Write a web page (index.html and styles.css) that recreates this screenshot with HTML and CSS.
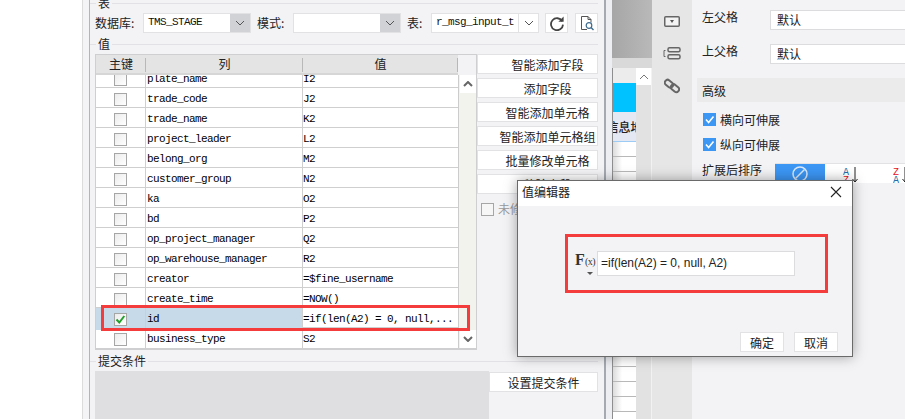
FILE: index.html
```html
<!DOCTYPE html>
<html lang="zh">
<head>
<meta charset="utf-8">
<title>值编辑器</title>
<link rel="stylesheet" href="styles.css">
</head>
<body>
<div class="page">
  <div class="blank"></div>
  <div class="pad"></div>
  <main class="panel">
    <div class="legend legend-first"><span>表</span></div>
    <div class="db-row">
      <label class="lbl lbl-db">数据库:</label>
      <div class="select select-db"><span class="sel-text mono">TMS_STAGE</span><span class="sel-arrow"><svg width="10" height="6" viewBox="0 0 10 6"><path d="M1 1l4 4 4-4" fill="none" stroke="#555" stroke-width="1"/></svg></span></div>
      <label class="lbl lbl-mode">模式:</label>
      <div class="select select-db"><span class="sel-text mono"></span><span class="sel-arrow"><svg width="10" height="6" viewBox="0 0 10 6"><path d="M1 1l4 4 4-4" fill="none" stroke="#555" stroke-width="1"/></svg></span></div>
      <label class="lbl lbl-table">表:</label>
      <div class="select select-db"><span class="sel-text mono">r_msg_input_t</span><span class="sel-arrow plain"><svg width="10" height="6" viewBox="0 0 10 6"><path d="M1 1l4 4 4-4" fill="none" stroke="#555" stroke-width="1"/></svg></span></div>
      <button class="icon-btn icon-refresh"><svg width="16" height="16" viewBox="0 0 16 16"><path d="M13.2 6.2A6 6 0 1 0 14 9.6" fill="none" stroke="#444" stroke-width="1.8"/><path d="M14.6 1.4v5.4H9.4z" fill="#444"/></svg></button>
      <button class="icon-btn"><svg width="16" height="16" viewBox="0 0 16 16"><path d="M8 14.5H2.5v-13H9l3 3v3" fill="none" stroke="#555" stroke-width="1"/><path d="M9 1.5v3h3" fill="none" stroke="#555" stroke-width="1"/><circle cx="10" cy="10.5" r="2.8" fill="none" stroke="#3d6b8f" stroke-width="1.2"/><path d="M12 12.5l2.5 2.5" stroke="#3d6b8f" stroke-width="1.4"/></svg></button>
    </div>
    <div class="legend legend-mid"><span>值</span></div>
    <div class="value-row">
      <div class="table">
        <div class="thead">
          <div class="th">主键</div>
          <div class="th">列</div>
          <div class="th">值</div>
          <div class="th-fill"></div>
        </div>
        <div class="thead-gap"></div>
        <div class="tbody-wrap">
          <div class="rows">
            <div class="row"><div class="c-key"><i class="cb"></i></div><div class="c-col">plate_name</div><div class="c-val">I2</div></div>
            <div class="row"><div class="c-key"><i class="cb"></i></div><div class="c-col">trade_code</div><div class="c-val">J2</div></div>
            <div class="row"><div class="c-key"><i class="cb"></i></div><div class="c-col">trade_name</div><div class="c-val">K2</div></div>
            <div class="row"><div class="c-key"><i class="cb"></i></div><div class="c-col">project_leader</div><div class="c-val">L2</div></div>
            <div class="row"><div class="c-key"><i class="cb"></i></div><div class="c-col">belong_org</div><div class="c-val">M2</div></div>
            <div class="row"><div class="c-key"><i class="cb"></i></div><div class="c-col">customer_group</div><div class="c-val">N2</div></div>
            <div class="row"><div class="c-key"><i class="cb"></i></div><div class="c-col">ka</div><div class="c-val">O2</div></div>
            <div class="row"><div class="c-key"><i class="cb"></i></div><div class="c-col">bd</div><div class="c-val">P2</div></div>
            <div class="row"><div class="c-key"><i class="cb"></i></div><div class="c-col">op_project_manager</div><div class="c-val">Q2</div></div>
            <div class="row"><div class="c-key"><i class="cb"></i></div><div class="c-col">op_warehouse_manager</div><div class="c-val">R2</div></div>
            <div class="row"><div class="c-key"><i class="cb"></i></div><div class="c-col">creator</div><div class="c-val">=$fine_username</div></div>
            <div class="row"><div class="c-key"><i class="cb"></i></div><div class="c-col">create_time</div><div class="c-val">=NOW()</div></div>
            <div class="row row-sel"><div class="c-key"><i class="cb"><svg width="11" height="11" viewBox="0 0 11 11"><path d="M1.5 5.5l2.8 3 5-6.5" fill="none" stroke="#22a02c" stroke-width="2"/></svg></i></div><div class="c-col">id</div><div class="c-val">=if(len(A2) = 0, null,...</div></div>
            <div class="row"><div class="c-key"><i class="cb"></i></div><div class="c-col">business_type</div><div class="c-val">S2</div></div>
          </div>
          <div class="vscroll">
            <span class="vs-btn"><svg width="10" height="6" viewBox="0 0 10 6"><path d="M1 5l4-4 4 4" fill="none" stroke="#666" stroke-width="2"/></svg></span>
            <span class="vs-btn"><svg width="10" height="6" viewBox="0 0 10 6"><path d="M1 1l4 4 4-4" fill="none" stroke="#666" stroke-width="2"/></svg></span>
          </div>
          <div class="mark-row"></div>
        </div>
      </div>
      <div class="side">
        <button class="btn">智能添加字段</button>
        <button class="btn">添加字段</button>
        <button class="btn">智能添加单元格</button>
        <button class="btn">智能添加单元格组</button>
        <button class="btn">批量修改单元格</button>
        <button class="btn">移除字段</button>
        <div class="unmod"><i class="cb-plain"></i><span>未修改不更新</span></div>
      </div>
    </div>
    <div class="legend legend-mid"><span>提交条件</span></div>
    <div class="submit-row">
      <div class="submit-box"></div>
      <button class="btn btn-submit">设置提交条件</button>
    </div>
  </main>
  <div class="gutter"></div>
  <section class="sheet">
    <div class="sheet-top"></div>
    <div class="sheet-top2"></div>
    <div class="sheet-main">
      <div class="grid">
        <div class="g-head"></div>
        <div class="g-blue"></div>
        <div class="g-title"><span>信息地</span></div>
        <div class="g-rows">
          <div class="g-row first"></div><div class="g-row"></div><div class="g-row"></div><div class="g-row"></div><div class="g-row"></div>
          <div class="g-row"></div><div class="g-row"></div><div class="g-row"></div><div class="g-row"></div><div class="g-row"></div>
          <div class="g-row"></div><div class="g-row"></div><div class="g-row"></div><div class="g-row"></div><div class="g-row"></div>
          <div class="g-row"></div><div class="g-row"></div><div class="g-row"></div>
        </div>
      </div>
      <div class="g-scroll"><span class="g-up"><svg width="10" height="6" viewBox="0 0 10 6"><path d="M1 5l4-4 4 4" fill="none" stroke="#777" stroke-width="1"/></svg></span></div>
    </div>
  </section>
  <nav class="tools">
    <svg width="16" height="11" viewBox="0 0 16 11"><rect x="0.75" y="0.75" width="14.5" height="9.5" rx="1" fill="#f3f3f3" stroke="#666" stroke-width="1.5"/><path d="M6 4h4l-2 3z" fill="#555"/></svg>
    <svg class="tool-mid" width="18" height="13" viewBox="0 0 18 13"><path d="M2.5 3.5H1v6h1.5" fill="none" stroke="#666" stroke-width="1"/><rect x="5" y="0.75" width="12" height="4" rx="1.5" fill="none" stroke="#666" stroke-width="1.5"/><rect x="5" y="7.75" width="12" height="4" rx="1.5" fill="none" stroke="#666" stroke-width="1.5"/></svg>
    <svg width="16" height="16" viewBox="0 0 16 16"><g fill="none" stroke="#666" stroke-width="2"><rect x="0.5" y="3" width="9" height="5.5" rx="2.7" transform="rotate(40 5 5.7)"/><rect x="6.5" y="7.5" width="9" height="5.5" rx="2.7" transform="rotate(40 11 10.2)"/></g></svg>
  </nav>
  <aside class="props">
    <div class="prop"><span class="prop-l">左父格</span><div class="prop-i">默认</div></div>
    <div class="prop"><span class="prop-l">上父格</span><div class="prop-i">默认</div></div>
    <div class="band">高级</div>
    <div class="check"><i class="cb-blue"><svg width="13" height="13" viewBox="0 0 13 13"><path d="M3 6.5l2.6 3L10.5 3.5" fill="none" stroke="#fff" stroke-width="1.6"/></svg></i><span>横向可伸展</span></div>
    <div class="check"><i class="cb-blue"><svg width="13" height="13" viewBox="0 0 13 13"><path d="M3 6.5l2.6 3L10.5 3.5" fill="none" stroke="#fff" stroke-width="1.6"/></svg></i><span>纵向可伸展</span></div>
    <div class="sort">
      <span class="sort-l">扩展后排序</span>
      <div class="seg">
        <span class="seg-on"><svg width="16" height="16" viewBox="0 0 16 16"><circle cx="8" cy="8" r="7" fill="none" stroke="#dce9fb" stroke-width="1.5"/><path d="M3.5 12.5l9-9" stroke="#dce9fb" stroke-width="1.5"/></svg></span>
        <span class="seg-i"><svg width="18" height="18" viewBox="0 0 18 18"><text x="0" y="9" class="az-a">A</text><text x="0" y="17" class="az-z">Z</text><path d="M12 1v15M9.5 13l2.5 3 2.5-3" fill="none" stroke="#222" stroke-width="1"/></svg></span>
        <span class="seg-i"><svg width="18" height="18" viewBox="0 0 18 18"><text x="0" y="9" class="az-z">Z</text><text x="0" y="17" class="az-a">A</text><path d="M12 1v15M9.5 13l2.5 3 2.5-3" fill="none" stroke="#222" stroke-width="1"/></svg></span>
      </div>
    </div>
  </aside>
  <div class="dialog">
    <header class="dlg-head"><span>值编辑器</span><svg width="12" height="12" viewBox="0 0 12 12"><path d="M1 1l10 10M11 1L1 11" stroke="#222" stroke-width="1.1"/></svg></header>
    <div class="dlg-body">
      <div class="formula">
        <div class="fx"><span class="fx-f">F</span><span class="fx-x">(x)</span><i class="fx-tri"></i></div>
        <div class="fx-input">=if(len(A2) = 0, null, A2)</div>
      </div>
      <div class="dlg-foot">
        <button class="btn btn-dlg">确定</button>
        <button class="btn btn-dlg">取消</button>
      </div>
    </div>
  </div>
</div>
</body>
</html>
```
FILE: styles.css
```css
* { box-sizing: border-box; }
html, body { margin: 0; padding: 0; }
body { width: 905px; height: 419px; overflow: hidden; background: #fff; font: 12px/14px "Noto Sans CJK SC", "Liberation Sans", sans-serif; color: #222; }
button { font: inherit; color: inherit; margin: 0; cursor: default; }
i { display: block; }
.page { position: relative; display: flex; width: 905px; height: 419px; overflow: hidden; }
.blank { width: 83px; flex: none; background: #fff; border-right: 1px solid #dcdcdc; }
.pad { width: 7px; flex: none; background: #f4f4f6; border-right: 1px solid #b4b4b8; }
.panel { width: 516px; flex: none; padding: 0 6px 0 5px; background: #f3f3f6; border-right: 2px solid #a5aab2; }
.legend { display: flex; align-items: center; gap: 2px; height: 14px; margin-left: -5px; }
.legend::before { content: ""; width: 6px; height: 1px; background: #e2e2e6; }
.legend::after { content: ""; flex: 1; height: 1px; background: #e2e2e6; }
.legend-first { margin-top: -4px; }
.legend-mid { margin-top: 4px; }
.db-row { display: flex; align-items: center; height: 20px; margin-top: 3px; }
.lbl { flex: none; }
.lbl-db { width: 48px; }
.lbl-mode { width: 36px; margin-left: 6px; }
.lbl-table { width: 24px; margin-left: 6px; }
.mono { font-family: "Liberation Mono", monospace; }
.select { display: flex; width: 108px; height: 20px; flex: none; background: #fff; border: 1px solid #e2e2e4; }
.sel-text { flex: 1; padding-left: 4px; font-size: 11px; letter-spacing: -0.6px; line-height: 17px; white-space: nowrap; overflow: hidden; color: #111; }
.sel-arrow { display: flex; align-items: center; justify-content: center; width: 20px; background: #d0d2d5; }
.sel-arrow.plain { background: #fff; border-left: 1px solid #e2e2e4; }
.icon-btn { display: flex; align-items: center; justify-content: center; width: 23px; height: 20px; padding: 0; background: #fff; border: 1px solid #e2e2e4; margin-left: 7px; }
.icon-refresh { margin-left: 6px; }
.value-row { display: flex; margin-top: 3px; }
.table { position: relative; width: 382px; height: 296px; flex: none; border: 1px solid #cfcfd1; border-bottom-width: 2px; background: #f3f3f6; }
.thead { display: grid; grid-template-columns: 50px 157px 155px 1fr; height: 18px; }
.th { position: relative; text-align: center; line-height: 18px; background: #e4e4e4; }
.th::after { content: ""; position: absolute; right: 0; top: 3px; bottom: 1px; width: 1px; background: #b8b8b8; }
.th-fill { background: #f3f3f6; }
.thead-gap { height: 2px; width: 362px; background: #d6d6d6; }
.tbody-wrap { position: relative; display: flex; height: 273px; overflow: hidden; }
.rows { display: flex; flex-direction: column; justify-content: flex-end; width: 363px; flex: none; background: #fff; border-right: 1px solid #ccc; }
.row { display: grid; grid-template-columns: 50px 157px 1fr; flex: none; height: 20px; border-bottom: 1px solid #cfcfcf; font: 11px/22px "Liberation Mono", monospace; letter-spacing: -0.6px; color: #000; white-space: nowrap; }
.row:last-child { border-bottom: 0; }
.c-key { display: flex; align-items: center; justify-content: center; border-right: 1px solid #cfcfcf; padding-right: 1px; }
.c-col { border-right: 1px solid #cfcfcf; padding-left: 1px; }
.c-val { overflow: hidden; }
.row-sel .c-key, .row-sel .c-col { background: #c7dae9; }
.cb { display: flex; align-items: center; justify-content: center; width: 13px; height: 13px; border: 1px solid #a6a6a6; background: linear-gradient(135deg, #ececec, #fff); }
.vscroll { display: flex; flex: 1; flex-direction: column; justify-content: space-between; margin-left: 1px; background: #f3f3ee; }
.vs-btn { display: flex; align-items: center; justify-content: center; height: 18px; background: #fff; }
.mark-row { position: absolute; left: 5px; bottom: 17px; width: 369px; height: 26px; border: 3px solid #f53c3c; }
.side { display: flex; width: 121px; flex: none; flex-direction: column; gap: 4px; }
.btn { height: 20px; padding: 0 0 0 20px; background: #fff; border: 1px solid #e2e2e4; text-align: center; line-height: 17px; white-space: nowrap; }
.unmod { display: flex; align-items: center; gap: 4px; margin: 4px 0 0 4px; color: #999; }
.cb-plain { width: 13px; height: 13px; border: 1px solid #a6a6a6; background: #f6f6f6; }
.submit-row { display: flex; margin-top: 3px; height: 48px; }
.submit-box { width: 394px; flex: none; background: #dfdfe1; }
.btn-submit { width: 109px; height: 20px; padding: 0; margin-top: 1px; }
.gutter { width: 6px; flex: none; background: #eceef2; }
.sheet { display: flex; width: 40px; flex: none; flex-direction: column; background: #e2e2e2; }
.sheet-top { height: 58px; background: linear-gradient(90deg, #a6a6a6, #b9b9b9); }
.sheet-top2 { height: 10px; background: #d9d9d9; }
.sheet-main { display: flex; flex: 1; min-height: 0; }
.grid { width: 24px; flex: none; overflow: hidden; background: #fff; border-left: 1px solid #8e8e8e; }
.g-head { height: 15px; background: #ececec; }
.g-blue { height: 29px; background: #00c2ff; }
.g-title { display: flex; justify-content: center; height: 30px; padding-top: 8px; background: #e4e8f2; border-bottom: 1px solid #9ccbf5; white-space: nowrap; font-weight: 500; }
.g-title span { flex: none; }
.g-rows { background: linear-gradient(90deg, #dcdcdc, #fff 40%); }
.g-row { height: 15px; border-bottom: 1px solid #b8b8b8; }
.g-scroll { flex: 1; border-right: 1px solid #f2f2f2; }
.g-up { display: flex; align-items: center; justify-content: center; height: 17px; background: #fff; }
.tools { display: flex; width: 40px; flex: none; flex-direction: column; align-items: center; gap: 20px; padding-top: 16px; background: #e6e6e6; }
.tool-mid { margin-bottom: -2px; }
.props { flex: 1; min-width: 0; padding: 10px 0 0 10px; background: #f3f3f6; overflow: hidden; }
.prop { display: flex; align-items: center; height: 20px; margin-bottom: 14px; }
.prop-l { width: 68px; flex: none; margin-top: -6px; }
.prop-i { flex: none; width: 150px; height: 20px; padding-left: 6px; background: #fff; border: 1px solid #dcdcde; line-height: 18px; }
.band { height: 24px; margin-left: -5px; padding-left: 5px; background: #ebebeb; line-height: 26px; }
.check { display: flex; align-items: center; gap: 4px; height: 13px; margin: 11px 0 12px 1px; }
.check + .check { margin-top: 0; }
.cb-blue { width: 13px; height: 13px; background: #3c96f4; }
.cb-blue svg { display: block; }
.sort { display: flex; }
.sort-l { width: 73px; flex: none; }
.seg { display: flex; flex: none; width: 150px; height: 20px; background: #fff; border-top: 1px solid #e2e2e4; }
.seg-on { display: flex; justify-content: center; width: 50px; padding-top: 2px; background: #3c96f4; }
.seg-i { display: flex; justify-content: center; width: 50px; padding: 2px 0 0 4px; }
.az-a, .az-z { font: 10px "Liberation Mono", monospace; }
.az-a { fill: #1f6fa8; }
.az-z { fill: #e8121a; }
.dialog { position: absolute; left: 517px; top: 180px; display: flex; width: 336px; height: 177px; flex-direction: column; background: #f3f3f6; border: 1px solid #6a6a6a; box-shadow: 0 0 12px rgba(0, 0, 0, .35); }
.dlg-head { display: flex; align-items: center; justify-content: space-between; height: 25px; flex: none; padding: 0 10px 4px 4px; background: #fff; }
.dlg-body { display: flex; flex: 1; flex-direction: column; }
.formula { display: flex; align-items: center; width: 263px; height: 59px; margin: 28px 0 0 47px; padding-left: 7px; border: 3px solid #f53c3c; }
.fx { position: relative; width: 22px; height: 22px; flex: none; font-family: "Liberation Serif", serif; color: #333; }
.fx-f { position: absolute; left: 0; top: 0; font-size: 16px; font-weight: bold; }
.fx-x { position: absolute; left: 10px; top: 2px; font-size: 10px; letter-spacing: -0.5px; }
.fx-tri { position: absolute; left: 12px; top: 19px; border: 3px solid transparent; border-top-color: #555; }
.fx-input { width: 198px; height: 25px; flex: none; margin-left: 0; padding-left: 3px; background: #fff; border: 1px solid #dcdcde; font: 12px/23px "Liberation Sans", sans-serif; white-space: nowrap; }
.dlg-foot { display: flex; justify-content: flex-end; gap: 10px; margin-top: 39px; padding-right: 14px; }
.btn-dlg { width: 44px; padding: 0; }
```
